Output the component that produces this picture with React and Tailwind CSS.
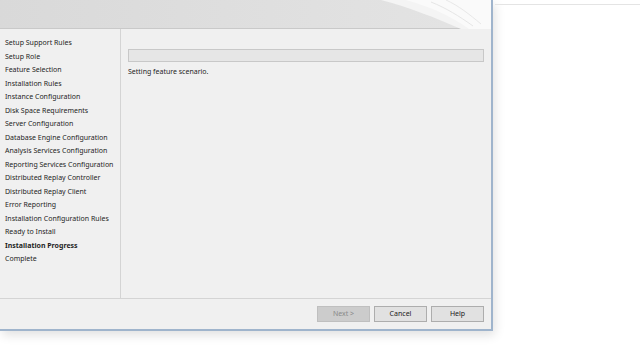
import React from "react";

const STEPS = [
  "Setup Support Rules",
  "Setup Role",
  "Feature Selection",
  "Installation Rules",
  "Instance Configuration",
  "Disk Space Requirements",
  "Server Configuration",
  "Database Engine Configuration",
  "Analysis Services Configuration",
  "Reporting Services Configuration",
  "Distributed Replay Controller",
  "Distributed Replay Client",
  "Error Reporting",
  "Installation Configuration Rules",
  "Ready to Install",
  "Installation Progress",
  "Complete",
];

const ACTIVE = "Installation Progress";

function HeaderArt() {
  return (
    <svg className="absolute right-0 top-0" width="140" height="29" viewBox="0 0 140 29">
      <path d="M30 0 C60 8 85 18 110 29 L140 29 L140 0 Z" fill="#f4f4f4" />
      <path d="M55 0 C80 7 100 16 118 29 L140 29 L140 0 Z" fill="#fafafa" />
      <path d="M80 2 C95 8 108 16 122 26" stroke="#e6e6e6" strokeWidth="1" fill="none" />
      <path d="M95 0 C108 6 118 14 130 24" stroke="#e8e8e8" strokeWidth="1" fill="none" />
    </svg>
  );
}

function Btn({ children, disabled }) {
  return (
    <div
      className={
        "w-[53px] h-[16px] flex items-center justify-center border text-[7px] " +
        (disabled
          ? "bg-[#cccccc] border-[#bfbfbf] text-[#8a8a8a]"
          : "bg-[#e1e1e1] border-[#adadad] text-[#1a1a1a]")
      }
    >
      {children}
    </div>
  );
}

export default function App() {
  return (
    <div
      className="w-[640px] h-[360px] bg-white relative overflow-hidden"
      style={{ fontFamily: '"Noto Sans", sans-serif' }}
    >
      <div className="absolute left-[495px] right-0 top-[4px] h-px bg-[#e4e4e4]" />
      <div className="w-[493px] h-[331px] flex flex-col bg-[#f0f0f0] border-r-2 border-b-2 border-[#9fb4cc] shadow-[2px_4px_10px_rgba(0,0,0,0.12)]">
        <div className="relative h-[29px] shrink-0 bg-gradient-to-r from-[#d9d9d9] to-[#e4e4e4] border-b border-[#c9c9c9]">
          <HeaderArt />
        </div>
        <div className="flex flex-1 min-h-0">
          <div className="w-[121px] shrink-0 border-r border-[#d4d4d4] pt-[7px] pl-[5px]">
            {STEPS.map((s) => (
              <div
                key={s}
                className={
                  "h-[13.5px] leading-[13.5px] text-[7px] whitespace-nowrap text-[#1e1e1e] " +
                  (s === ACTIVE ? "font-bold" : "")
                }
              >
                {s}
              </div>
            ))}
          </div>
          <div className="flex-1 pt-[20px] pl-[7px] pr-[7px]">
            <div className="h-[13px] border border-[#c8c8c8] bg-[#e6e6e6]" />
            <div className="text-[7px] text-[#1e1e1e] mt-[5px]">Setting feature scenario.</div>
          </div>
        </div>
        <div className="h-[31px] shrink-0 border-t border-[#d4d4d4] flex items-center justify-end gap-[4px] pr-[7px]">
          <Btn disabled>Next &gt;</Btn>
          <Btn>Cancel</Btn>
          <Btn>Help</Btn>
        </div>
      </div>
    </div>
  );
}
